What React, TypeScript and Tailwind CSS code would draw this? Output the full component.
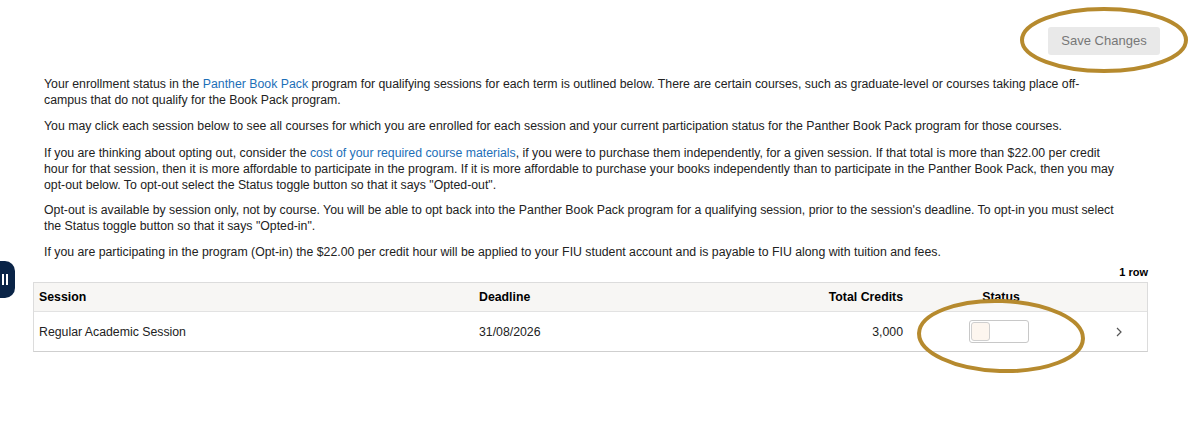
export default function App() {
  return (
    <div className="relative w-[1194px] h-[438px] bg-white overflow-hidden text-[12.3px] leading-[16px] text-[#222] font-['Liberation_Sans',Arial,sans-serif]">
      {/* left side tab */}
      <div className="absolute left-0 top-[261px] w-[15px] h-[37px] rounded-r-[10px] bg-[#0a2447] flex items-center gap-[2px] pl-[2px]">
        <span className="w-[2px] h-[11px] bg-white" />
        <span className="w-[2px] h-[11px] bg-white" />
      </div>

      <div className="flex justify-end pt-[27px] pr-[34px]">
        <button className="w-[112px] h-[28px] rounded-[3px] bg-[#e9e9e9] text-[#777] text-[13px]">Save Changes</button>
      </div>

      <div className="ml-[44px] mt-[21px] w-[1076px] flex flex-col gap-[10px]">
        <p>
          Your enrollment status in the <span className="text-[#1d6fb8]">Panther Book Pack</span> program for qualifying sessions for each term is outlined below. There are certain courses, such as graduate-level or courses taking place off-campus that do not qualify for the Book Pack program.
        </p>
        <p>
          You may click each session below to see all courses for which you are enrolled for each session and your current participation status for the Panther Book Pack program for those courses.
        </p>
        <p className="mt-[1px]">
          If you are thinking about opting out, consider the <span className="text-[#1d6fb8]">cost of your required course materials</span>, if you were to purchase them independently, for a given session. If that total is more than $22.00 per credit hour for that session, then it is more affordable to participate in the program. If it is more affordable to purchase your books independently than to participate in the Panther Book Pack, then you may opt-out below. To opt-out select the Status toggle button so that it says "Opted-out".
        </p>
        <p className="-mt-[1px]">
          Opt-out is available by session only, not by course. You will be able to opt back into the Panther Book Pack program for a qualifying session, prior to the session's deadline. To opt-in you must select the Status toggle button so that it says "Opted-in".
        </p>
        <p>
          If you are participating in the program (Opt-in) the $22.00 per credit hour will be applied to your FIU student account and is payable to FIU along with tuition and fees.
        </p>
      </div>

      <div className="ml-[33px] w-[1115px] mt-[5px] text-right font-bold text-[11px] leading-[14px] text-black">1 row</div>

      <div className="ml-[33px] w-[1115px] mt-[3px] border border-[#dcdcdc] border-b-[#cfcfcf]">
        <div className="flex h-[29px] items-center bg-[#f7f6f4] border-b border-[#e2e2e2] font-bold text-black">
          <div className="w-[439px] pl-[5px]">Session</div>
          <div className="w-[288px] pl-[6px]">Deadline</div>
          <div className="w-[148px] pr-[6px] text-right">Total Credits</div>
          <div className="w-[184px] text-center">Status</div>
          <div className="flex-1" />
        </div>
        <div className="flex h-[39px] items-center text-[#222]">
          <div className="w-[439px] pl-[5px]">Regular Academic Session</div>
          <div className="w-[288px] pl-[6px]">31/08/2026</div>
          <div className="w-[148px] pr-[6px] text-right">3,000</div>
          <div className="w-[184px] flex justify-center pr-[5px]">
            <div className="w-[60px] h-[23px] rounded-[3px] border border-[#c8c8c8] bg-white p-px">
              <div className="w-[19px] h-full rounded-[3px] border border-[#cfcfcf] bg-[#fdf6ef]" />
            </div>
          </div>
          <div className="flex-1 flex justify-center">
            <svg width="8" height="12" viewBox="0 0 8 12" className="ml-[-2px]">
              <polyline points="2,2 6,6 2,10" fill="none" stroke="#555" strokeWidth="1.2" />
            </svg>
          </div>
        </div>
      </div>

      {/* annotation ellipses */}
      <svg className="absolute inset-0 pointer-events-none" width="1194" height="438">
        <ellipse cx="1104" cy="40" rx="82" ry="31" fill="none" stroke="#b68a2e" strokeWidth="4" />
        <ellipse cx="1001" cy="336" rx="82" ry="35" fill="none" stroke="#b68a2e" strokeWidth="4" transform="rotate(2 1001 336)" />
      </svg>
    </div>
  );
}
